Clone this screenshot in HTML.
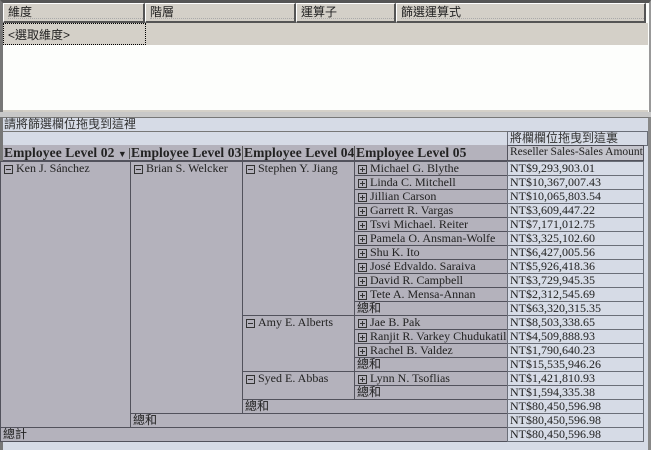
<!DOCTYPE html>
<html><head><meta charset="utf-8"><style>
*{margin:0;padding:0;box-sizing:border-box}
body{width:651px;height:450px;overflow:hidden;background:#d6dbe6;position:relative;font-family:"Liberation Serif","Noto Sans CJK TC",serif;font-size:12px;color:#222}
div{position:absolute}
.cj{font-family:"Liberation Sans","Noto Sans CJK TC",sans-serif;font-size:12px}
.h{background:#d4d0c8;border-top:1px solid #fff;border-left:1px solid #fff;border-right:2px solid #555;border-bottom:2px solid #555;padding:1px 0 0 4px;line-height:15px}
.h span{border-bottom:1px dotted #aaa;display:block;height:14px}
.c{background:#b4b2bc;border:1px solid #52525c;padding:0 0 0 2px;line-height:13px;white-space:nowrap;overflow:hidden}
.v{background:#d6dbe6;border:1px solid #6a6e78;padding:0 0 0 2px;line-height:13px;white-space:nowrap;font-size:12px}
.b{display:inline-block;width:9px;height:9px;border:1px solid #333;position:relative;vertical-align:-2px;margin:0 3px 0 1px}
.b:before{content:"";position:absolute;left:1px;top:3px;width:5px;height:1px;background:#333}
.p:after{content:"";position:absolute;left:3px;top:1px;width:1px;height:5px;background:#333}
.hb{font-weight:bold;font-size:13.5px;line-height:14px;letter-spacing:0.1px}
</style></head><body>
<div style="left:0;top:0;width:651px;height:117px;background:#fdfefc;border-top:3px solid #555;border-left:3px solid #777;border-right:2px solid #999"></div>
<div style="left:3px;top:23px;width:645px;height:22px;background:#d4d0c8"></div>
<div class="h cj" style="left:3px;top:3px;width:142px;height:20px"><span>維度</span></div>
<div class="h cj" style="left:145px;top:3px;width:151px;height:20px"><span>階層</span></div>
<div class="h cj" style="left:296px;top:3px;width:100px;height:20px"><span>運算子</span></div>
<div class="h cj" style="left:396px;top:3px;width:250px;height:20px"><span>篩選運算式</span></div>
<div class="cj" style="left:3px;top:23px;width:143px;height:22px;border:1px dotted #000;padding:2px 0 0 4px">&lt;選取維度&gt;</div>
<div style="left:3px;top:110px;width:645px;height:2px;background:#d4d0c8"></div>
<div style="left:0;top:112px;width:651px;height:5px;background:#c8c8c8"></div>
<div style="left:0;top:117px;width:651px;height:333px;border-left:3px solid #777;border-right:3px solid #888;border-top:1px solid #777"></div>
<div class="cj" style="left:4px;top:117px;line-height:14px;color:#333">請將篩選欄位拖曳到這裡</div>
<div style="left:3px;top:131px;width:645px;height:1px;background:#777"></div>
<div class="v cj" style="left:507px;top:131px;width:141px;height:15px;line-height:13px;color:#333">將欄欄位拖曳到這裏</div>
<div style="left:3px;top:145px;width:505px;height:16px;background:#b4b2bc;border-bottom:1px solid #52525c"></div>
<div class="hb" style="left:4px;top:146px">Employee Level 02 <span style="font-size:9px">▼</span></div>
<div style="left:129px;top:148px;width:1px;height:11px;background:#555"></div>
<div class="hb" style="left:131px;top:146px">Employee Level 03</div>
<div style="left:242px;top:146px;width:1px;height:14px;background:#555"></div>
<div class="hb" style="left:244px;top:146px">Employee Level 04</div>
<div style="left:354px;top:146px;width:1px;height:14px;background:#555"></div>
<div class="hb" style="left:356px;top:146px">Employee Level 05</div>
<div class="c" style="left:507px;top:145px;width:137px;height:16px;background:#c4c4cc;line-height:13px;font-size:11.5px">Reseller Sales-Sales Amount</div>

<div class="c" style="left:0;top:161px;width:131px;height:267px"><span class="b"></span>Ken J. Sánchez</div>
<div class="c" style="left:130px;top:161px;width:113px;height:253px"><span class="b"></span>Brian S. Welcker</div>
<div class="c" style="left:242px;top:161px;width:113px;height:155px"><span class="b"></span>Stephen Y. Jiang</div>
<div class="c" style="left:242px;top:315px;width:113px;height:57px"><span class="b"></span>Amy E. Alberts</div>
<div class="c" style="left:242px;top:371px;width:113px;height:29px"><span class="b"></span>Syed E. Abbas</div>

<div class="c" style="left:354px;top:161px;width:154px;height:15px"><span class="b p"></span>Michael G. Blythe</div>
<div class="c" style="left:354px;top:175px;width:154px;height:15px"><span class="b p"></span>Linda C. Mitchell</div>
<div class="c" style="left:354px;top:189px;width:154px;height:15px"><span class="b p"></span>Jillian Carson</div>
<div class="c" style="left:354px;top:203px;width:154px;height:15px"><span class="b p"></span>Garrett R. Vargas</div>
<div class="c" style="left:354px;top:217px;width:154px;height:15px"><span class="b p"></span>Tsvi Michael. Reiter</div>
<div class="c" style="left:354px;top:231px;width:154px;height:15px"><span class="b p"></span>Pamela O. Ansman-Wolfe</div>
<div class="c" style="left:354px;top:245px;width:154px;height:15px"><span class="b p"></span>Shu K. Ito</div>
<div class="c" style="left:354px;top:259px;width:154px;height:15px"><span class="b p"></span>José Edvaldo. Saraiva</div>
<div class="c" style="left:354px;top:273px;width:154px;height:15px"><span class="b p"></span>David R. Campbell</div>
<div class="c" style="left:354px;top:287px;width:154px;height:15px"><span class="b p"></span>Tete A. Mensa-Annan</div>
<div class="c cj" style="left:354px;top:301px;width:154px;height:15px">總和</div>
<div class="c" style="left:354px;top:315px;width:154px;height:15px"><span class="b p"></span>Jae B. Pak</div>
<div class="c" style="left:354px;top:329px;width:154px;height:15px"><span class="b p"></span>Ranjit R. Varkey Chudukatil</div>
<div class="c" style="left:354px;top:343px;width:154px;height:15px"><span class="b p"></span>Rachel B. Valdez</div>
<div class="c cj" style="left:354px;top:357px;width:154px;height:15px">總和</div>
<div class="c" style="left:354px;top:371px;width:154px;height:15px"><span class="b p"></span>Lynn N. Tsoflias</div>
<div class="c cj" style="left:354px;top:385px;width:154px;height:15px">總和</div>
<div class="c cj" style="left:242px;top:399px;width:266px;height:15px">總和</div>
<div class="c cj" style="left:130px;top:413px;width:378px;height:15px">總和</div>
<div class="c cj" style="left:0;top:427px;width:508px;height:15px">總計</div>

<div class="v" style="left:507px;top:161px;width:137px;height:15px">NT$9,293,903.01</div>
<div class="v" style="left:507px;top:175px;width:137px;height:15px">NT$10,367,007.43</div>
<div class="v" style="left:507px;top:189px;width:137px;height:15px">NT$10,065,803.54</div>
<div class="v" style="left:507px;top:203px;width:137px;height:15px">NT$3,609,447.22</div>
<div class="v" style="left:507px;top:217px;width:137px;height:15px">NT$7,171,012.75</div>
<div class="v" style="left:507px;top:231px;width:137px;height:15px">NT$3,325,102.60</div>
<div class="v" style="left:507px;top:245px;width:137px;height:15px">NT$6,427,005.56</div>
<div class="v" style="left:507px;top:259px;width:137px;height:15px">NT$5,926,418.36</div>
<div class="v" style="left:507px;top:273px;width:137px;height:15px">NT$3,729,945.35</div>
<div class="v" style="left:507px;top:287px;width:137px;height:15px">NT$2,312,545.69</div>
<div class="v" style="left:507px;top:301px;width:137px;height:15px">NT$63,320,315.35</div>
<div class="v" style="left:507px;top:315px;width:137px;height:15px">NT$8,503,338.65</div>
<div class="v" style="left:507px;top:329px;width:137px;height:15px">NT$4,509,888.93</div>
<div class="v" style="left:507px;top:343px;width:137px;height:15px">NT$1,790,640.23</div>
<div class="v" style="left:507px;top:357px;width:137px;height:15px">NT$15,535,946.26</div>
<div class="v" style="left:507px;top:371px;width:137px;height:15px">NT$1,421,810.93</div>
<div class="v" style="left:507px;top:385px;width:137px;height:15px">NT$1,594,335.38</div>
<div class="v" style="left:507px;top:399px;width:137px;height:15px">NT$80,450,596.98</div>
<div class="v" style="left:507px;top:413px;width:137px;height:15px">NT$80,450,596.98</div>
<div class="v" style="left:507px;top:427px;width:137px;height:15px">NT$80,450,596.98</div>
</body></html>
